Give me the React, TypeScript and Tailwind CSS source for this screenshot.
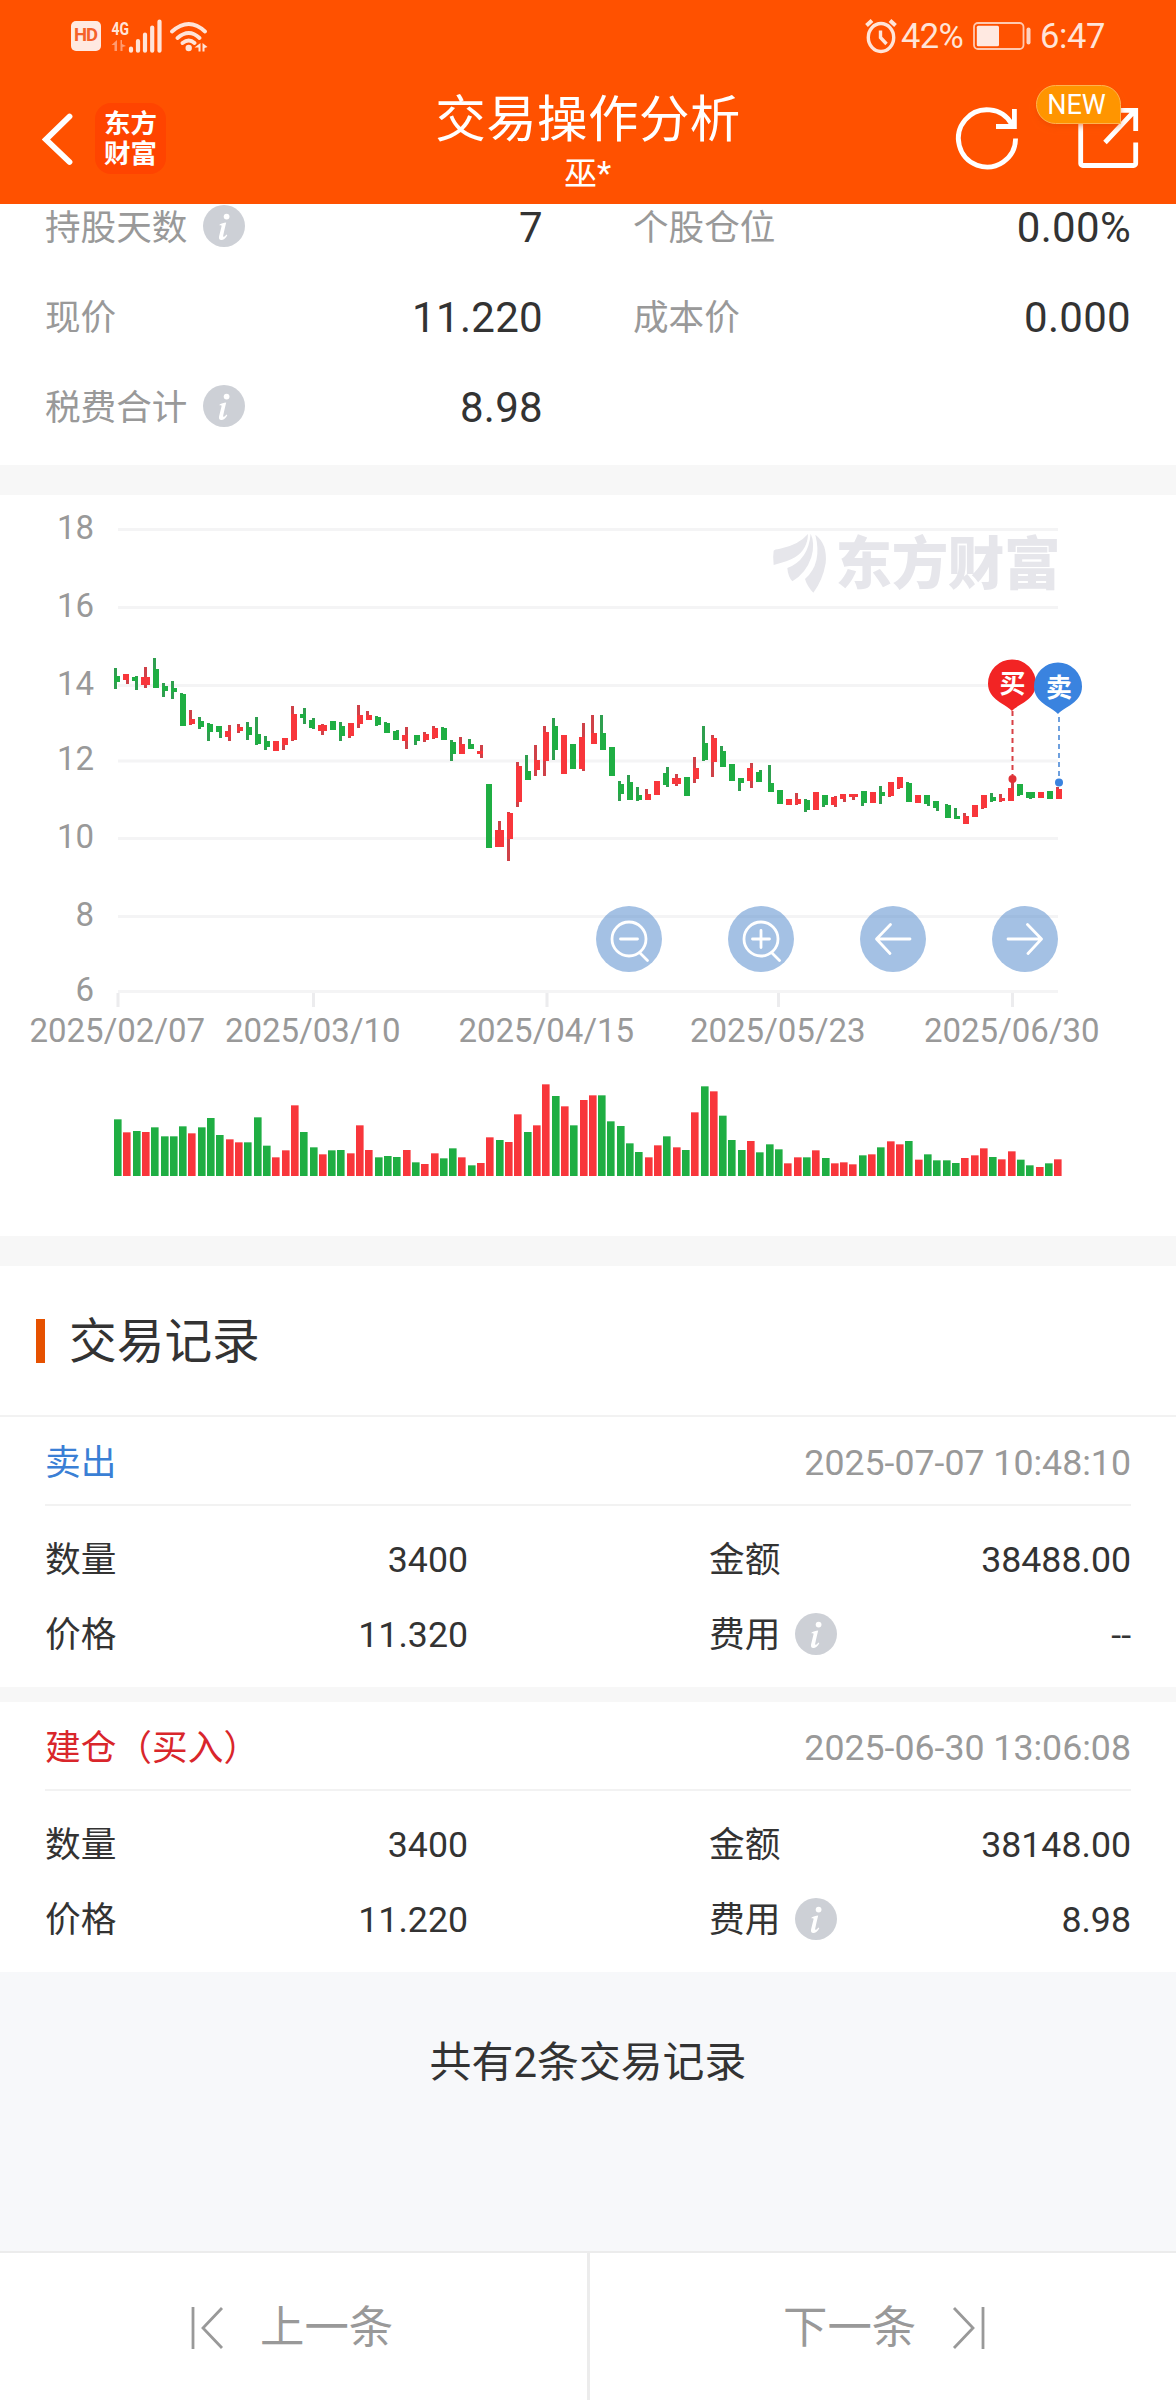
import React from "react";

type Tone = "r" | "g";
// tone, body x, body width, body top, body bottom, wick x, wick top, wick bottom (in thirds of a pixel)
type Candle = [Tone, number, number, number, number, number?, number?, number?];

const RED = "#f8363b";
const GREEN = "#1fae43";
const WICK_RED = "#cf4148";
const WICK_GREEN = "#2f9f4f";

const runs: { x: number; y: number; candles: Candle[] }[] = [
  {
    x: 100,
    y: 125,
    candles: [
      ["g", 42, 18, 169, 185, 42, 145, 206],
      ["r", 69, 18, 161, 180, 78, 161, 192],
      ["g", 96, 18, 170, 183, 105, 167, 210],
      ["r", 123, 27, 170, 195, 132, 142, 204],
      ["g", 159, 18, 146, 204, 159, 115, 204],
      ["g", 186, 18, 197, 213, 186, 190, 231],
      ["g", 213, 18, 204, 216, 213, 182, 238],
      ["g", 240, 18, 221, 318, 240, 219, 318],
      ["r", 267, 18, 296, 312, 267, 271, 315],
      ["g", 294, 18, 303, 321, 294, 291, 327],
      ["g", 321, 18, 312, 336, 321, 309, 363],
      ["g", 348, 18, 317, 335, 357, 317, 355],
      ["r", 375, 18, 333, 350, 384, 315, 363],
      ["r", 411, 18, 320, 333, 411, 312, 339],
      ["g", 438, 18, 320, 346, 438, 306, 361],
      ["g", 465, 18, 341, 373, 465, 290, 375],
      ["g", 492, 18, 362, 380, 492, 348, 390],
      ["r", 519, 18, 363, 392],
      ["r", 546, 18, 354, 374, 546, 354, 391],
      ["r", 573, 18, 282, 361, 573, 259, 362],
      ["g", 600, 18, 282, 295, 609, 264, 312],
      ["g", 627, 18, 300, 323, 636, 295, 326],
      ["r", 654, 27, 315, 333, 663, 312, 345],
      ["g", 690, 18, 304, 329],
      ["g", 717, 18, 318, 348, 717, 307, 363],
      ["r", 744, 18, 308, 349, 744, 308, 355],
      ["r", 771, 18, 284, 313, 771, 256, 323],
    ],
  },
  {
    x: 360,
    y: 125,
    candles: [
      ["r", 18, 18, 284, 299, 18, 274, 299],
      ["g", 45, 18, 291, 316, 45, 289, 318],
      ["g", 72, 18, 308, 338, 72, 306, 338],
      ["g", 99, 18, 332, 359, 108, 329, 360],
      ["r", 126, 18, 344, 364, 135, 322, 386],
      ["g", 162, 18, 346, 362, 162, 346, 374],
      ["r", 189, 18, 341, 361, 189, 337, 366],
      ["r", 216, 18, 325, 355, 216, 317, 358],
      ["g", 243, 18, 323, 359, 243, 320, 359],
      ["g", 270, 18, 366, 402, 270, 359, 423],
      ["r", 297, 18, 371, 401, 297, 352, 402],
      ["g", 324, 18, 372, 386, 324, 358, 386],
      ["r", 351, 18, 393, 403, 360, 376, 413],
      ["g", 378, 18, 491, 684],
      ["r", 405, 27, 630, 681, 414, 602, 681],
      ["r", 441, 18, 579, 657, 441, 576, 723],
      ["r", 468, 18, 437, 546, 468, 426, 560],
      ["g", 495, 18, 453, 481, 495, 406, 481],
      ["r", 522, 18, 419, 449, 522, 374, 469],
      ["r", 549, 18, 336, 422, 549, 318, 467],
      ["g", 576, 18, 319, 390, 576, 295, 420],
      ["r", 603, 18, 344, 461],
      ["g", 630, 18, 371, 448],
      ["r", 657, 18, 351, 448, 666, 308, 454],
      ["r", 693, 18, 338, 373, 693, 285, 373],
      ["g", 720, 18, 339, 391, 720, 285, 391],
      ["g", 747, 18, 382, 468, 747, 381, 468],
      ["g", 774, 18, 493, 521, 774, 484, 543],
    ],
  },
  {
    x: 620,
    y: 185,
    candles: [
      ["g", 21, 18, 307, 360, 21, 284, 360],
      ["g", 48, 18, 344, 360, 48, 320, 363],
      ["r", 75, 18, 343, 360, 75, 328, 360],
      ["r", 102, 18, 303, 345],
      ["g", 129, 18, 278, 315, 138, 260, 321],
      ["r", 156, 27, 293, 312, 165, 283, 319],
      ["g", 192, 18, 292, 348],
      ["r", 219, 18, 265, 297, 219, 231, 308],
      ["g", 246, 18, 189, 241, 246, 137, 242],
      ["r", 273, 18, 175, 247, 273, 164, 290],
      ["g", 300, 18, 213, 261, 300, 198, 261],
      ["g", 327, 18, 252, 304],
      ["g", 354, 18, 294, 309, 354, 294, 332],
      ["r", 381, 18, 264, 304, 390, 249, 324],
      ["g", 408, 18, 275, 307, 417, 269, 307],
      ["g", 444, 18, 308, 336, 444, 256, 336],
      ["g", 471, 18, 330, 371],
      ["r", 498, 18, 357, 375],
      ["r", 525, 18, 357, 372, 525, 340, 375],
      ["g", 552, 18, 361, 390, 552, 358, 395],
      ["r", 579, 18, 336, 390, 579, 335, 390],
      ["g", 606, 18, 344, 375, 606, 344, 381],
      ["r", 633, 18, 352, 375, 642, 348, 380],
      ["r", 660, 18, 342, 356, 669, 342, 366],
    ],
  },
  {
    x: 840,
    y: 145,
    candles: [
      ["r", 27, 27, 461, 471, 36, 461, 480],
      ["g", 63, 18, 454, 489, 63, 454, 498],
      ["r", 90, 18, 456, 489],
      ["g", 117, 18, 457, 468, 117, 438, 492],
      ["r", 144, 18, 426, 468, 144, 426, 470],
      ["r", 171, 18, 411, 443, 171, 411, 448],
      ["g", 198, 18, 430, 487, 198, 426, 487],
      ["r", 225, 18, 465, 490],
      ["g", 252, 18, 465, 492, 261, 465, 498],
      ["g", 279, 18, 483, 503, 288, 483, 513],
      ["g", 315, 18, 496, 534, 315, 491, 535],
      ["g", 342, 18, 528, 538, 342, 504, 538],
      ["r", 369, 18, 528, 553, 369, 519, 553],
      ["r", 396, 18, 495, 531],
      ["r", 423, 18, 465, 504, 423, 465, 506],
      ["g", 450, 18, 471, 484, 450, 459, 485],
      ["r", 477, 18, 474, 484, 477, 463, 486],
      ["r", 504, 18, 444, 483, 513, 420, 483],
      ["g", 531, 18, 433, 466, 531, 433, 469],
      ["g", 558, 27, 457, 473, 567, 457, 477],
      ["r", 594, 18, 456, 474],
      ["g", 621, 18, 453, 478],
      ["r", 648, 18, 448, 478, 648, 440, 478],
    ],
  },
];

// tone + bar height in thirds of a pixel
const volumes =
  "g170 r131 g135 r132 g146 g119 g119 g149 r128 g146 g174 g123 r110 r101 g101 g176 g91 r56 r77 r212 g132 g86 r65 g77 g78 r68 r152 r78 g56 g60 g57 r78 g41 r36 r68 g53 g83 r56 g32 r39 r116 g108 r102 r185 g132 r152 r275 g240 r209 g152 r228 r242 g242 g164 g150 g98 g72 r56 r92 g119 r86 g78 r191 g269 r254 g181 g108 g78 r105 g71 g95 g80 r38 r56 g56 r77 g54 r38 r41 r35 g62 r65 g86 r104 r95 g105 r49 g65 g47 g47 g39 r54 r62 r83 g57 r50 r74 g49 g32 r27 g38 r50"
    .split(" ")
    .map((s) => ({ tone: s[0] as Tone, h: Number(s.slice(1)) / 3 }));

const gridLines = [
  { label: "18", y: 33 },
  { label: "16", y: 111 },
  { label: "14", y: 189 },
  { label: "12", y: 264.5 },
  { label: "10", y: 342 },
  { label: "8", y: 420 },
  { label: "6", y: 495 },
];

const dates = [
  { label: "2025/02/07", x: 118 },
  { label: "2025/03/10", x: 313.5 },
  { label: "2025/04/15", x: 547 },
  { label: "2025/05/23", x: 778.5 },
  { label: "2025/06/30", x: 1012.5 },
];

function InfoIcon() {
  return (
    <svg width="42" height="42" viewBox="0 0 42 42" className="relative -top-px shrink-0">
      <circle cx="21" cy="21" r="21" fill="#cdd0d6" />
      <circle cx="23.6" cy="11.6" r="2.9" fill="#fff" />
      <path d="M16.6 19.4c2-.9 4-1.6 6.6-2-1 4.400-2.200 8.800-3 13-.2 1.200.2 1.700.9 1.300.9-.5 1.600-1.300 2.300-2.200l.9.7c-1.500 2.900-3.700 4.800-6 4.800-2 0-2.700-1.400-2.200-3.700l2.400-9.900c.2-1-.3-1.200-1.900-1z" fill="#fff" />
    </svg>
  );
}

function StatusBar() {
  return (
    <div className="flex h-[72px] items-center pl-[71px] pr-[71px] text-[#ffe4d8]">
      <div className="flex h-[30px] w-[30px] items-center justify-center rounded-[5px] bg-[#ffe9e1] pr-px text-[18.500px] font-bold tracking-[-1px] text-[#f5622a]">
        HD
      </div>
      <svg width="100" height="40" viewBox="108 16 100 40" className="ml-[7px]">
        <text x="111.500" y="35" fontSize="19" fontWeight="700" fill="#ffe4d8" textLength="17.500" lengthAdjust="spacingAndGlyphs">4G</text>
        <path d="M117 40v11h-2.500v-6h-3zM120.500 40v11h2v-4l3.500-1-4-2v-4z" fill="#ff9b70" />
        <g stroke="#ffe4d8" strokeWidth="4.200" strokeLinecap="round">
          <path d="M131 53.500v2.200M138 46v9.700M145 39.500v16.200M152.200 32.500v23.200M159.500 26.500v29.200" transform="translate(0 -5)" />
        </g>
        <g fill="none" stroke="#ffe4d8" strokeWidth="3.800" strokeLinecap="round">
          <path d="M172 31.500q17-15 33 0M177.500 38q11.500-10 22 0M182.500 43q6.500-5 12 0" />
        </g>
        <circle cx="188.700" cy="48" r="3.200" fill="#ffe4d8" />
        <path d="M200.500 43v8.500h-2v-4h-4zM202.500 43l5 4-3 1v3.500h-2z" fill="#ffe4d8" />
      </svg>
      <div className="flex-1" />
      <svg width="32" height="36" viewBox="0 0 32 36" fill="none" stroke="#ffe4d8" strokeWidth="3.400">
        <ellipse cx="16" cy="19.500" rx="12.700" ry="14" />
        <path d="M15.500 12.500v7l6 6.500" />
        <path d="M1.500 7.500L7 2.500M30.500 7.500L25 2.500" strokeWidth="4" />
      </svg>
      <span className="ml-[4px] mt-px w-[64px] whitespace-nowrap text-[34.500px] tracking-[-0.700px]">42%</span>
      <svg width="59" height="28" viewBox="0 0 59 28" className="ml-[8px]">
        <rect x="1" y="1" width="49.500" height="26" rx="4" fill="none" stroke="#ffc9b0" strokeWidth="1.800" />
        <rect x="3.800" y="3.800" width="22.200" height="20.400" rx="1.500" fill="#ffe9e1" />
        <rect x="53.500" y="5.500" width="4" height="17" rx="2" fill="#ffd3c0" />
      </svg>
      <span className="ml-[8px] mt-px w-[65px] whitespace-nowrap text-[34.500px] tracking-[-0.400px]">6:47</span>
    </div>
  );
}

function Header() {
  return (
    <header className="relative h-[204px] bg-[#ff5100] text-white">
      <StatusBar />
      <div className="flex h-[132px] items-start">
        <div className="flex w-[420px] items-start pl-[42px] pt-[31px]">
          <svg width="32" height="72" viewBox="42 103 32 72" fill="none" stroke="#fff" strokeWidth="5.800" strokeLinecap="round">
            <path d="M69.500 116.500L46 139.500l23.500 22.500" />
          </svg>
          <div className="ml-[21px] flex h-[71px] w-[71px] flex-col items-center justify-center rounded-[16px] bg-[#ff4400] text-[26.500px] font-bold leading-[30px]">
            <span>东方</span>
            <span>财富</span>
          </div>
        </div>
        <div className="flex w-[336px] flex-col items-center pt-[16px]">
          <h1 className="whitespace-nowrap text-[50.500px] leading-[64px] tracking-[0.400px]">交易操作分析</h1>
          <span className="-ml-px text-[33px] leading-[44px]">巫*</span>
        </div>
        <div className="relative w-[420px]">
          <svg width="420" height="132" viewBox="756 72 420 132" fill="none" stroke="#fff" strokeWidth="4.800">
            <path d="M1015.600 138.500A28.600 28.600 0 1 1 1012 124.500M1014.400 109v17.500H996" />
            <path d="M1100 110.300h35.700v20.700M1135.700 142.500v21a2 2 0 0 1-2 2h-51a2 2 0 0 1-2-2V112M1105 142.500l30-32" />
          </svg>
          <span className="absolute left-[280px] top-[13px] flex h-[39px] w-[85px] items-center justify-center rounded-[20px] rounded-br-none border border-[#ffb34f] bg-[#ff9500] pr-[4px] pt-[2px] text-[27px] shadow-md shadow-[#e0460066]">
            NEW
          </span>
        </div>
      </div>
    </header>
  );
}

function Stat({ label, value, info }: { label: string; value: string; info?: boolean }) {
  return (
    <div className="flex h-[90px] items-center justify-between">
      <div className="flex items-center gap-[16px] text-[35.600px] text-[#999]">
        <span className="pt-[3px]">{label}</span>
        {info && <InfoIcon />}
      </div>
      <span className="text-[42px] tracking-[0.300px] text-[#333]">{value}</span>
    </div>
  );
}

function Chart() {
  return (
    <svg width="1176" height="741" viewBox="0 0 1176 741" className="block">
      <g fill="#f4f4f5">
        {gridLines.map((g) => (
          <rect key={g.label} x="118" y={g.y} width="940" height="3" />
        ))}
      </g>
      <g fill="#ececee">
        {dates.map((d) => (
          <rect key={d.label} x={d.x - 1.5} y="498" width="3" height="14" />
        ))}
      </g>
      <g fill="#999" fontSize="33">
        {gridLines.map((g) => (
          <text key={g.label} x="94" y={g.y + 10.5} textAnchor="end">{g.label}</text>
        ))}
        {dates.map((d) => (
          <text key={d.label} x={d.x - 0.7} y="547" textAnchor="middle">{d.label}</text>
        ))}
      </g>

      <g fill="#e6e6eb">
        <g transform="translate(740 15) scale(.3333)">
          <path d="M101 122Q103 118 120 116Q175 106 204 72Q203 118 165 142Q145 154 101 165Q98 140 101 122Z" />
          <path d="M212 71Q226 100 214 142Q198 190 157 214Q144 200 142 174Q205 150 212 71Z" />
          <path d="M226 74Q263 102 257 160Q248 212 220 248Q202 230 195 207Q248 160 226 74Z" />
        </g>
        <text x="835.500" y="89" fontSize="56.500" fontWeight="900" textLength="225">东方财富</text>
      </g>

      {runs.map((run) => (
        <g key={run.x} transform={`translate(${run.x} ${run.y}) scale(.33333)`} shapeRendering="crispEdges">
          {run.candles.map(([tone, bx, bw, bt, bb, wx, wt, wb]) => (
            <g key={bx}>
              {wx !== undefined && wt !== undefined && wb !== undefined && (
                <rect x={wx} y={wt} width="9" height={wb - wt} fill={tone === "r" ? WICK_RED : WICK_GREEN} />
              )}
              <rect x={bx} y={bt} width={bw} height={bb - bt} fill={tone === "r" ? RED : GREEN} />
            </g>
          ))}
        </g>
      ))}

      {volumes.map((v, i) => (
        <rect key={i} x={Math.round(114 + i * 9.31)} y={681 - v.h} width="7.600" height={v.h} fill={v.tone === "r" ? RED : GREEN} />
      ))}

      <g fill="none" strokeWidth="2">
        <path d="M1012.500 216v64" stroke="#d84045" strokeDasharray="5 4" />
        <path d="M1059 222v64" stroke="#6ea0de" strokeDasharray="5 4" />
      </g>
      <circle cx="1012.500" cy="284" r="4" fill="#e03236" />
      <circle cx="1059" cy="287.500" r="4" fill="#3a83df" />
      <path d="M1012 216C1006 209 988 205 988 188.500a24 24 0 0 1 48 0C1036 205 1018 209 1012 216z" fill="#f22424" />
      <path d="M1058 219C1052 212 1034 208 1034 191.500a24 24 0 0 1 48 0C1082 208 1064 212 1058 219z" fill="#3a83df" />
      <g fill="#fff" fontSize="26" fontWeight="700" textAnchor="middle">
        <text x="1012.500" y="198">买</text>
        <text x="1059" y="201.500">卖</text>
      </g>
    </svg>
  );
}

function ControlButton({ label, children }: { label: string; children: React.ReactNode }) {
  return (
    <button aria-label={label} className="flex h-[66px] w-[66px] items-center justify-center rounded-full bg-[#4983c9]/50">
      <svg width="66" height="66" viewBox="0 0 66 66" fill="none" stroke="#fff" strokeWidth="2.800" strokeLinecap="round" strokeLinejoin="round">
        {children}
      </svg>
    </button>
  );
}

function TradeRecord({
  side,
  sideClass,
  time,
  qty,
  amount,
  price,
  fee,
}: {
  side: string;
  sideClass: string;
  time: string;
  qty: string;
  amount: string;
  price: string;
  fee: string;
}) {
  return (
    <section className="h-[270px] bg-white px-[45px]">
      <div className="flex h-[89px] items-center justify-between border-b-2 border-[#f2f2f2] pt-[6px]">
        <span className={sideClass}>{side}</span>
        <span className="text-[#999]">{time}</span>
      </div>
      <div className="grid grid-cols-[423px_422px] justify-between pt-[17px]">
        <div className="flex h-[75px] items-center justify-between">
          <span>数量</span>
          <span>{qty}</span>
        </div>
        <div className="flex h-[75px] items-center justify-between">
          <span>金额</span>
          <span>{amount}</span>
        </div>
        <div className="flex h-[75px] items-center justify-between">
          <span>价格</span>
          <span>{price}</span>
        </div>
        <div className="flex h-[75px] items-center justify-between">
          <span className="flex items-center gap-[15px]">
            费用
            <InfoIcon />
          </span>
          <span>{fee}</span>
        </div>
      </div>
    </section>
  );
}

export default function App() {
  return (
    <div className="flex h-[2400px] w-[1176px] flex-col overflow-hidden bg-[#f7f7f7] font-['Roboto','Noto_Sans_CJK_SC',sans-serif] text-[#333]">
      <Header />

      <section className="h-[261px] overflow-hidden bg-white px-[45px]">
        <div className="-mt-[22px] grid grid-cols-[498px_498px] justify-between">
          <Stat label="持股天数" value="7" info />
          <Stat label="个股仓位" value="0.00%" />
          <Stat label="现价" value="11.220" />
          <Stat label="成本价" value="0.000" />
          <Stat label="税费合计" value="8.98" info />
        </div>
      </section>

      <section className="relative mt-[30px] h-[741px] bg-white">
        <Chart />
        <div className="absolute left-[596px] top-[411px] flex gap-[66px]">
          <ControlButton label="缩小">
            <circle cx="33" cy="33" r="17" />
            <path d="M24.500 33h17M44 47l7.500 7.500" />
          </ControlButton>
          <ControlButton label="放大">
            <circle cx="33" cy="33" r="17" />
            <path d="M24.500 33h17M33 24.500v17M44 47l7.500 7.500" />
          </ControlButton>
          <ControlButton label="左移">
            <path d="M50 33H17M30.500 18.500L16.500 33l13.500 14.500" />
          </ControlButton>
          <ControlButton label="右移">
            <path d="M16 33h33M35.500 18.500L49.500 33L36 47.500" />
          </ControlButton>
        </div>
      </section>

      <section className="mt-[30px] flex h-[151px] items-center border-b-2 border-[#f2f2f2] bg-white pl-[36px]">
        <span className="h-[44px] w-[9px] bg-[#e65100]" />
        <h2 className="ml-[24px] pt-[5px] text-[47.700px]">交易记录</h2>
      </section>

      <div className="flex flex-col gap-[15px] text-[35.700px]">
        <TradeRecord side="卖出" sideClass="text-[#3a7fd5]" time="2025-07-07 10:48:10" qty="3400" amount="38488.00" price="11.320" fee="--" />
        <TradeRecord side="建仓（买入）" sideClass="text-[#d9262b]" time="2025-06-30 13:06:08" qty="3400" amount="38148.00" price="11.220" fee="8.98" />
      </div>

      <p className="flex flex-1 justify-center bg-[#f7f8fa] pt-[60px] text-[41.900px]">共有2条交易记录</p>

      <nav className="grid h-[149px] grid-cols-[590px_586px] border-t-2 border-[#ececec] bg-white text-[44.400px] text-[#999]">
        <button className="flex items-center border-r-3 border-[#ececec] pl-[191px] pt-[2px]">
          <svg width="34" height="44" viewBox="0 0 34 44" fill="none" stroke="#999" strokeWidth="2.800">
            <path d="M2 1v42M31 2L12 22l19 20" />
          </svg>
          <span className="ml-[35px] pt-[2px]">上一条</span>
        </button>
        <button className="flex items-center pl-[193px] pt-[2px]">
          <span className="pt-[2px]">下一条</span>
          <svg width="34" height="44" viewBox="0 0 34 44" fill="none" stroke="#999" strokeWidth="2.800" className="ml-[35px]">
            <path d="M32 1v42M3 2l19 20L3 42" />
          </svg>
        </button>
      </nav>
    </div>
  );
}
